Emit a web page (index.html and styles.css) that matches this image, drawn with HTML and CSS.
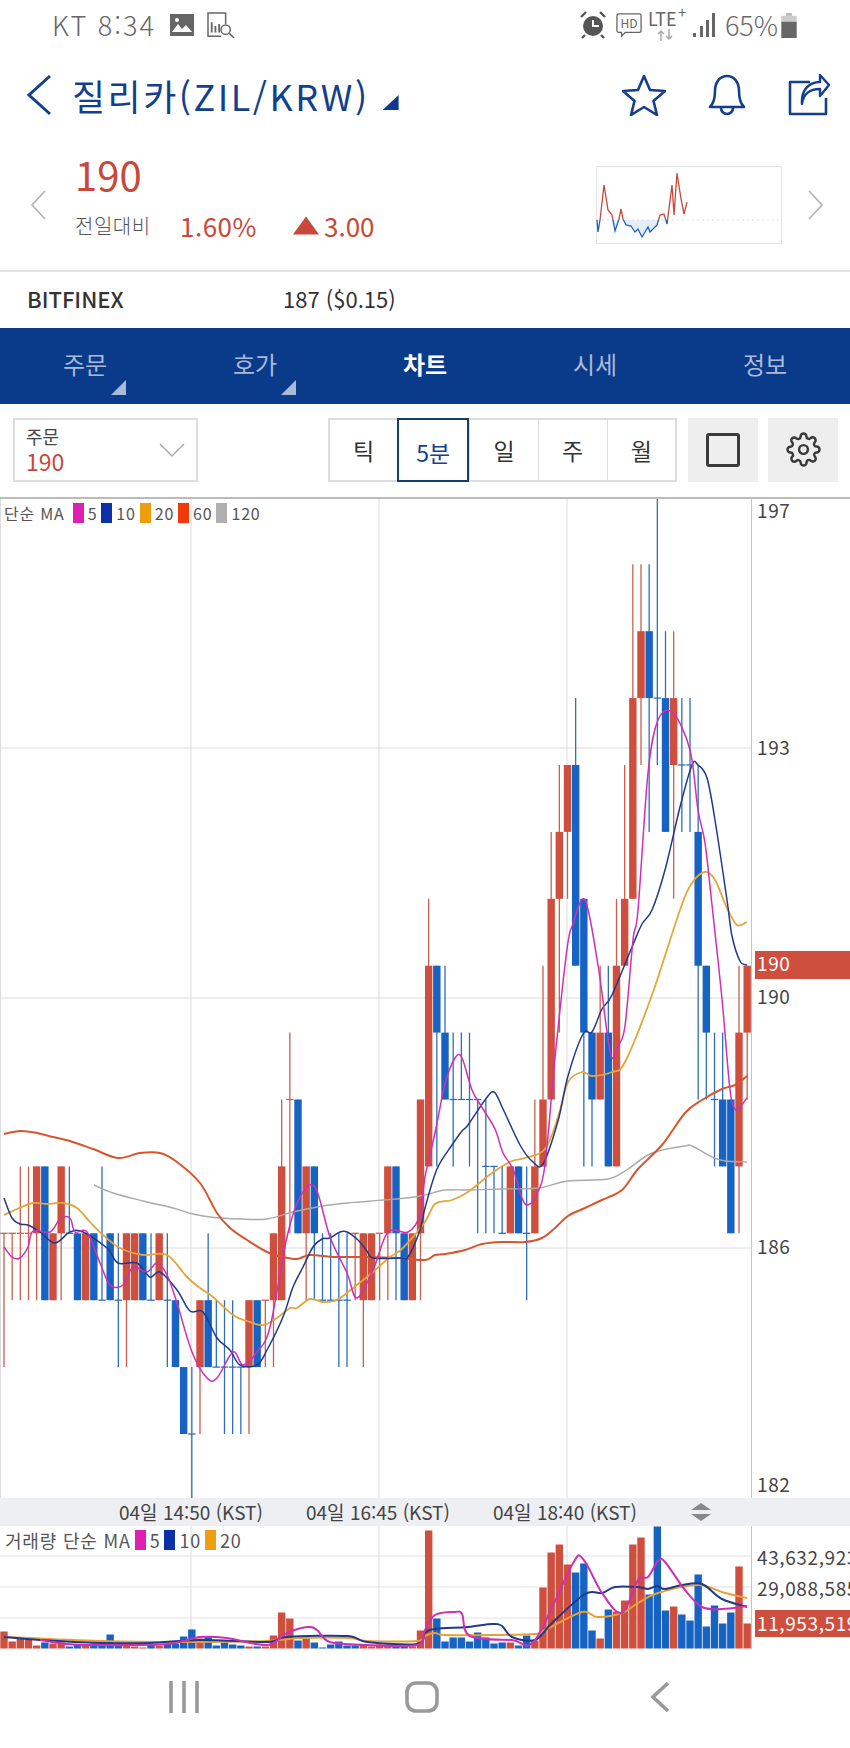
FILE: index.html
```html
<!DOCTYPE html>
<html lang="ko">
<head>
  <meta charset="UTF-8">
  <meta name="viewport" content="width=device-width, initial-scale=1.0">
  <title>질리카(ZIL/KRW) 차트</title>
  <link rel="stylesheet" href="styles.css">
</head>
<body>

  <!-- 상태바 -->
  <div class="status">
    <span class="status-text carrier">KT 8:34</span>
    <svg class="ic-image" viewBox="0 0 24 22"><path d="M0 0h24v22H0z" fill="#666"/><path d="M2 18l6-8 4 5 4-4 6 7z" fill="#fff"/><circle cx="7" cy="6" r="2" fill="#fff"/></svg>
    <svg class="ic-search" viewBox="0 0 30 28"><g fill="none" stroke="#666" stroke-width="1.6"><path d="M15 26H1V1h19v12"/><circle cx="20" cy="19" r="5"/><path d="M24 23l5 5"/></g><path d="M5 11v11M9 15v7M13 13v9" stroke="#666" stroke-width="2"/></svg>
    <span class="status-right">
      <svg class="ic-alarm" viewBox="0 0 26 28"><circle cx="13" cy="15" r="10" fill="#555"/><path d="M13 9v6h6" fill="none" stroke="#fff" stroke-width="2"/><path d="M1 6l5-5M25 6l-5-5M5 24l-3 3M21 24l3 3" stroke="#555" stroke-width="2.4"/></svg>
      <svg class="ic-hd" viewBox="0 0 28 28"><path d="M3 2h22a2 2 0 0 1 2 2v16a2 2 0 0 1-2 2H10l-4 4v-4H3a2 2 0 0 1-2-2V4a2 2 0 0 1 2-2z" fill="none" stroke="#666" stroke-width="1.4"/><text x="14" y="17" class="hd-text">HD</text></svg>
      <span class="lte">LTE<sup>+</sup><svg class="ic-updata" viewBox="0 0 18 12"><path d="M5 12V2M2 5l3-3 3 3M13 0v10M10 7l3 3 3-3" fill="none" stroke="#aaa" stroke-width="1.5"/></svg></span>
      <svg class="ic-signal" viewBox="0 0 24 24"><path d="M1 20h3v4H1zM8 13h3v11H8zM14 7h3v17h-3zM20 0h3v24h-3z" fill="#666"/></svg>
      <span class="status-text">65%</span>
      <svg class="ic-battery" viewBox="0 0 18 26"><path d="M6 0h6v3H6z" fill="#bbb"/><path d="M1 3h16v6H1z" fill="#ccc"/><path d="M1 9h16v17H1z" fill="#666"/></svg>
    </span>
  </div>

  <!-- 종목 헤더 -->
  <div class="header">
    <svg class="ic-back" viewBox="0 0 26 42"><path d="M24 2L3 21l21 19" fill="none" stroke="#123f8e" stroke-width="3"/></svg>
    <h1 class="title">질리카(ZIL/KRW)</h1>
    <span class="title-tri"></span>
    <div class="header-icons">
      <svg class="ic-star" viewBox="0 0 44 42"><path d="M22 2l6 14 15 1-11.500 10 3.500 14-13-8-13 8 3.500-14L1 17l15-1z" fill="none" stroke="#123f8e" stroke-width="2.600" stroke-linejoin="round"/></svg>
      <svg class="ic-bell" viewBox="0 0 40 42"><path d="M3 33c4-4 5-8 5-16C8 8 13 2 20 2s12 6 12 15c0 8 1 12 5 16z" fill="none" stroke="#123f8e" stroke-width="2.600" stroke-linejoin="round"/><path d="M14 34a6 6 0 0 0 12 0" fill="none" stroke="#123f8e" stroke-width="2.600"/></svg>
      <svg class="ic-share" viewBox="0 0 42 42"><path d="M22 8H2v32h36V24" fill="none" stroke="#123f8e" stroke-width="2.600" stroke-linejoin="round"/><path d="M14 30c1-10 8-15 18-15v7l9-11-9-10v7C20 8 13 17 14 30z" fill="none" stroke="#123f8e" stroke-width="2.400" stroke-linejoin="round"/></svg>
    </div>
  </div>

  <!-- 현재가 -->
  <div class="quote">
    <svg class="ic-side" viewBox="0 0 16 30"><path d="M15 1L2 15l13 14" fill="none" stroke="#b5b5b5" stroke-width="1.800"/></svg>
    <div class="quote-main">
      <div class="price">190</div>
      <div class="change">
        <span class="change-label">전일대비</span>
        <span class="change-rate">1.60%</span>
        <span class="change-tri"></span>
        <span class="change-val">3.00</span>
      </div>
    </div>
    <svg class="spark" viewBox="596 164 186 78">
      <defs>
        <clipPath id="sparkUp"><rect x="596" y="164" width="186" height="54"/></clipPath>
        <clipPath id="sparkDown"><rect x="596" y="218" width="186" height="24"/></clipPath>
      </defs>
      <rect x="596.500" y="164.500" width="185" height="77" fill="#fff" stroke="#e4e4e4"/>
      <path d="M612 218l3 11 4-12 4 0 3 6 5 1 4 6 3-3 4 8 6-10 2 5 7-7 3-5z" fill="#e3eefa"/>
      <path d="M597 218H782" stroke="#ddd" stroke-dasharray="2 3"/>
      <polyline class="spark-up" clip-path="url(#sparkUp)" points="597,218 598,230 600,218 604,183 608,208 612,213 615,229 619,217 621,207 623,217 626,223 631,224 635,230 638,227 642,235 648,225 650,230 657,223 660,213 664,212 667,222 672,183 674,213 677,171 681,197 684,212 687,200"/>
      <polyline class="spark-down" clip-path="url(#sparkDown)" points="597,218 598,230 600,218 604,183 608,208 612,213 615,229 619,217 621,207 623,217 626,223 631,224 635,230 638,227 642,235 648,225 650,230 657,223 660,213 664,212 667,222 672,183 674,213 677,171 681,197 684,212 687,200"/>
    </svg>
    <svg class="ic-side" viewBox="0 0 16 30"><path d="M1 1l13 14L1 29" fill="none" stroke="#b5b5b5" stroke-width="1.800"/></svg>
  </div>

  <div class="exchange">
    <span class="exchange-name">BITFINEX</span>
    <span class="exchange-price">187 ($0.15)</span>
  </div>

  <!-- 탭 -->
  <div class="tabs">
    <div class="tab has-tri">주문</div>
    <div class="tab has-tri">호가</div>
    <div class="tab active">차트</div>
    <div class="tab">시세</div>
    <div class="tab">정보</div>
  </div>

  <!-- 차트 옵션 -->
  <div class="controls">
    <div class="select">
      <div class="select-text">
        <div class="select-label">주문</div>
        <div class="select-value">190</div>
      </div>
      <svg class="ic-down" viewBox="0 0 26 14"><path d="M1 1l12 12L25 1" fill="none" stroke="#aaa" stroke-width="1.400"/></svg>
    </div>
    <div class="periods">
      <div class="period">틱</div>
      <div class="period on">5분</div>
      <div class="period">일</div>
      <div class="period">주</div>
      <div class="period">월</div>
    </div>
    <div class="tool"><span class="tool-square"></span></div>
    <div class="tool">
      <svg class="ic-gear" viewBox="0 0 24 24" fill="none" stroke="#3a3a3a" stroke-width="1.700">
        <circle cx="12" cy="12" r="3"/>
        <path d="M19.400 15a1.650 1.650 0 0 0 .33 1.820l.06.06a2 2 0 0 1 0 2.830 2 2 0 0 1-2.830 0l-.06-.06a1.650 1.650 0 0 0-1.820-.33 1.650 1.650 0 0 0-1 1.510V21a2 2 0 0 1-2 2 2 2 0 0 1-2-2v-.09A1.650 1.650 0 0 0 9 19.400a1.650 1.650 0 0 0-1.820.33l-.06.06a2 2 0 0 1-2.830 0 2 2 0 0 1 0-2.830l.06-.06a1.650 1.650 0 0 0 .33-1.820 1.650 1.650 0 0 0-1.510-1H3a2 2 0 0 1-2-2 2 2 0 0 1 2-2h.09A1.650 1.650 0 0 0 4.600 9a1.650 1.650 0 0 0-.33-1.820l-.06-.06a2 2 0 0 1 0-2.830 2 2 0 0 1 2.830 0l.06.06a1.650 1.650 0 0 0 1.820.33H9a1.650 1.650 0 0 0 1-1.510V3a2 2 0 0 1 2-2 2 2 0 0 1 2 2v.09a1.650 1.650 0 0 0 1 1.510 1.650 1.650 0 0 0 1.820-.33l.06-.06a2 2 0 0 1 2.830 0 2 2 0 0 1 0 2.830l-.06.06a1.650 1.650 0 0 0-.33 1.820V9a1.650 1.650 0 0 0 1.510 1H21a2 2 0 0 1 2 2 2 2 0 0 1-2 2h-.09a1.650 1.650 0 0 0-1.510 1z"/>
      </svg>
    </div>
  </div>

  <!-- 가격 차트 -->
  <div class="chart-price">
    <svg id="priceChart" class="chart-svg" viewBox="0 499 850 999" width="850" height="999"></svg>
    <div class="legend">
      <span class="legend-name">단순 MA</span>
      <i class="sw ma5"></i><span>5</span>
      <i class="sw ma10"></i><span>10</span>
      <i class="sw ma20"></i><span>20</span>
      <i class="sw ma60"></i><span>60</span>
      <i class="sw ma120"></i><span>120</span>
    </div>
  </div>

  <div class="timebar">
    <span class="time">04일 14:50 (KST)</span>
    <span class="time">04일 16:45 (KST)</span>
    <span class="time">04일 18:40 (KST)</span>
    <svg class="ic-updown" viewBox="0 0 20 18"><path d="M10 0l10 7H0zM0 11h20l-10 7z" fill="#888"/></svg>
  </div>

  <!-- 거래량 차트 -->
  <div class="chart-vol">
    <svg id="volChart" class="chart-svg" viewBox="0 1526 850 123" width="850" height="123"></svg>
    <div class="legend vol-legend">
      <span>거래량 단순 MA</span>
      <i class="sw ma5"></i><span>5</span>
      <i class="sw ma10"></i><span>10</span>
      <i class="sw ma20"></i><span>20</span>
    </div>
  </div>

  <!-- 하단 내비 -->
  <div class="softkeys">
    <svg class="key" viewBox="0 0 30 32"><path d="M2 0v32M15 0v32M28 0v32" stroke="#999" stroke-width="3.600"/></svg>
    <svg class="key" viewBox="0 0 34 32"><rect x="2" y="2" width="30" height="28" rx="9" fill="none" stroke="#999" stroke-width="3.600"/></svg>
    <svg class="key" viewBox="0 0 20 32"><path d="M18 2L3 16l15 14" fill="none" stroke="#999" stroke-width="3.600"/></svg>
  </div>

  <script src="chart.js"></script>

</body>
</html>
```

FILE: styles.css
```css
* {
  margin: 0;
  padding: 0;
  box-sizing: border-box;
}

html, body {
  width: 850px;
  height: 1748px;
  overflow: hidden;
  background: #fff;
  font-family: "Noto Sans CJK KR", "Noto Sans", sans-serif;
  color: #444;
}

svg {
  display: block;
  flex: none;
}

/* status bar */
.status {
  display: flex;
  align-items: center;
  height: 50px;
  padding: 0 52px;
}

.status-text {
  font-size: 27px;
  line-height: 30px;
  color: #666;
  font-weight: 300;
}

.carrier { letter-spacing: 2px; }

.ic-image { width: 24px; height: 22px; margin-left: 14px; }
.ic-search { width: 30px; height: 26px; margin-left: 12px; }

.status-right {
  display: flex;
  align-items: center;
  margin-left: auto;
}

.ic-alarm { width: 26px; height: 28px; }
.ic-hd { width: 28px; height: 26px; margin-left: 9px; }
.hd-text {
  font-size: 13px;
  text-anchor: middle;
  fill: #666;
}

.lte {
  position: relative;
  width: 38px;
  height: 36px;
  margin-left: 5px;
  font-size: 18px;
  line-height: 22px;
  color: #666;
}

.lte sup {
  position: absolute;
  top: -6px;
  left: 30px;
  font-size: 15px;
  line-height: 22px;
}

.ic-updata {
  position: absolute;
  top: 22px;
  left: 8px;
  width: 18px;
  height: 12px;
}

.ic-signal { width: 24px; height: 24px; margin: 0 9px 0 6px; }
.ic-battery { width: 18px; height: 25px; margin-left: 2px; }

/* header */
.header {
  display: flex;
  align-items: center;
  height: 90px;
  padding: 0 20px 0 26px;
}

.ic-back { width: 26px; height: 42px; }

.title {
  margin-left: 20px;
  font-size: 36px;
  line-height: 44px;
  font-weight: 400;
  color: #123f8e;
  letter-spacing: 2.5px;
  white-space: nowrap;
}

.title-tri {
  width: 16px;
  height: 15px;
  margin: 15px 0 0 13px;
  background: #0d3a8c;
  clip-path: polygon(100% 0, 100% 100%, 0 100%);
}

.header-icons {
  display: flex;
  align-items: center;
  margin-left: auto;
  gap: 41px;
}

.ic-star { width: 44px; height: 42px; }
.ic-bell { width: 40px; height: 42px; }
.ic-share { width: 42px; height: 42px; }

/* quote */
.quote {
  display: flex;
  align-items: center;
  height: 132px;
  padding: 0 26px 0 30px;
  border-bottom: 2px solid #e4e4e4;
}

.ic-side { width: 16px; height: 30px; }

.quote-main {
  margin-left: 29px;
  padding-bottom: 20px;
}

.price {
  font-size: 40px;
  line-height: 48px;
  color: #c8483a;
}

.change {
  display: flex;
  align-items: center;
  margin-top: 13px;
  height: 30px;
}

.change-label {
  font-size: 20px;
  color: #555;
  font-weight: 300;
  width: 105px;
  letter-spacing: 0.5px;
}

.change-rate,
.change-val {
  font-size: 26px;
  color: #c8483a;
}

.change-rate { letter-spacing: 0.5px; }

.change-tri {
  width: 26px;
  height: 18px;
  margin: 0 5px 0 36px;
  background: #c8483a;
  clip-path: polygon(50% 0, 100% 100%, 0 100%);
}

.spark {
  width: 186px;
  height: 78px;
  margin-left: auto;
  margin-right: 26px;
}

.spark polyline {
  fill: none;
  stroke-width: 1.300;
}

.spark-up { stroke: #c8483a; }
.spark-down { stroke: #1763c4; }

/* exchange row */
.exchange {
  display: flex;
  align-items: center;
  height: 56px;
  padding: 0 0 5px 27px;
  font-size: 22px;
  color: #333;
}

.exchange-name {
  width: 256px;
  font-weight: 500;
}

/* tabs */
.tabs {
  display: flex;
  height: 76px;
  background: #0a3a8a;
}

.tab {
  position: relative;
  flex: 1;
  text-align: center;
  font-size: 24px;
  line-height: 72px;
  color: #a9bad6;
}

.tab.active {
  color: #fff;
  font-weight: 700;
}

.tab.has-tri::after {
  content: "";
  position: absolute;
  left: 111px;
  bottom: 9px;
  width: 15px;
  height: 15px;
  background: #a9bad6;
  clip-path: polygon(100% 0, 100% 100%, 0 100%);
}

/* controls */
.controls {
  display: flex;
  align-items: center;
  height: 95px;
  padding: 0 12px 2px 13px;
  border-bottom: 2px solid #bbb;
}

.select {
  display: flex;
  align-items: center;
  justify-content: space-between;
  width: 185px;
  height: 64px;
  padding: 0 11px 0 11px;
  border: 2px solid #ddd;
}

.select-label {
  font-size: 18px;
  line-height: 24px;
  color: #444;
}

.select-value {
  font-size: 23px;
  line-height: 27px;
  color: #c8483a;
}

.ic-down { width: 26px; height: 14px; }

.periods {
  display: flex;
  width: 350px;
  height: 64px;
  margin-left: 130px;
  border: 2px solid #ddd;
}

.period {
  flex: 1;
  text-align: center;
  font-size: 23px;
  line-height: 60px;
  color: #333;
  border-left: 1px solid #ddd;
}

.period:first-child { border-left: 0; }

.period.on {
  margin: -2px 0;
  line-height: 64px;
  border: 2px solid #123f70;
  color: #123f8e;
}

.tool {
  display: flex;
  align-items: center;
  justify-content: center;
  width: 70px;
  height: 64px;
  margin-left: 11px;
  background: #eee;
}

.tool + .tool { margin-left: 10px; }

.tool-square {
  width: 34px;
  height: 34px;
  border: 3px solid #3a3a3a;
  border-radius: 3px;
}

.ic-gear { width: 35px; height: 35px; }

/* charts */
.chart-price {
  position: relative;
  height: 999px;
}

.chart-vol {
  position: relative;
  height: 123px;
}

.chart-svg .grid {
  stroke: #dcdcdc;
  stroke-width: 1;
}

.chart-svg .grid-light {
  stroke: #ececec;
  stroke-width: 1.500;
}

.chart-svg .axis {
  stroke: #c4c4c4;
  stroke-width: 1;
}

.chart-svg .wick { stroke-width: 1.300; }
.chart-svg .wick.r { stroke: #c9604f; }
.chart-svg .wick.b { stroke: #2f6fb8; }
.chart-svg .body.r { fill: #cf4f3f; }
.chart-svg .body.b { fill: #1763c4; }

.chart-svg .ma-line {
  fill: none;
  stroke-linejoin: round;
}

.chart-svg .line5 { stroke: #cf2fb5; stroke-width: 1.500; }
.chart-svg .line10 { stroke: #1f3a8a; stroke-width: 1.500; }
.chart-svg .line20 { stroke: #e2a63a; stroke-width: 1.800; }
.chart-svg .line60 { stroke: #d9552e; stroke-width: 2; }
.chart-svg .line120 { stroke: #aaa; stroke-width: 1.400; }
.chart-svg .vline5 { stroke: #cf2fb5; stroke-width: 2; }
.chart-svg .vline10 { stroke: #1f3a8a; stroke-width: 2; }
.chart-svg .vline20 { stroke: #e8a032; stroke-width: 2; }

.chart-svg .label {
  font-family: "Noto Sans CJK KR", "Noto Sans", sans-serif;
  font-size: 19px;
  letter-spacing: 0.6px;
  fill: #444;
}

.chart-svg .tag { fill: #cf4f3f; }

.chart-svg .tag-label {
  font-family: "Noto Sans CJK KR", "Noto Sans", sans-serif;
  font-size: 19px;
  letter-spacing: 0.6px;
  fill: #fff;
}

.legend {
  position: absolute;
  left: 4px;
  top: 4px;
  display: flex;
  align-items: center;
  height: 20px;
  font-size: 16px;
  letter-spacing: 0.8px;
  color: #555;
}

.legend span { line-height: 20px; }

.legend-name { margin-right: 4px; }

.sw {
  width: 11px;
  height: 20px;
  margin: 0 4px;
}

.sw.ma5 { background: #e020b0; }
.sw.ma10 { background: #0d2fa8; }
.sw.ma20 { background: #ee9f10; }
.sw.ma60 { background: #f03a0a; }
.sw.ma120 { background: #b0b0b0; }

.vol-legend { left: 5px; top: 4px; font-size: 18px; }

.timebar {
  position: relative;
  display: flex;
  align-items: center;
  height: 28px;
  padding-left: 119px;
  background: #eeeff3;
  gap: 43px;
}

.time {
  width: 144px;
  font-size: 19px;
  line-height: 28px;
  white-space: nowrap;
  color: #444;
}

.ic-updown {
  width: 20px;
  height: 18px;
  margin-left: 11px;
}

/* soft keys */
.softkeys {
  display: flex;
  align-items: flex-start;
  height: 99px;
  padding: 32px 0 0 169px;
}

.key { height: 32px; }
.key:nth-child(1) { width: 30px; }
.key:nth-child(2) { width: 34px; margin-left: 206px; }
.key:nth-child(3) { width: 20px; margin-left: 211px; }
```

FILE: chart.js
```js
// 1틱 = 66.9px, level 0 = y 1434
const levelY = l => 1434 - 66.9 * l;
const candleX = i => 4 + 8.1667 * i;
const NS = 'http://www.w3.org/2000/svg';

// color high bodyTop bodyBottom low (top === bottom 이면 도지)
const candles = [
  'r 3 3 3 1','r 3 3 3 2','r 4 3 3 2','r 4 3 3 2','r 4 4 3 2','b 4 4 2 2','r 3 3 2 2','r 4 4 3 2','b 4 3 3 3','b 3 3 2 2',
  'r 3 3 2 2','b 3 3 2 2','b 4 2 2 2','b 3 3 2 2','b 3 2 2 1','r 3 3 2 1','r 3 3 2 2','b 3 3 2 2','b 3 2 2 2','r 3 3 2 2',
  'b 3 2 2 1','b 2 2 1 1','b 1 1 0 0','b 1 0 0 -1','r 2 2 1 0','b 3 2 1 1','b 2 1 1 1','b 2 1 1 0','b 2 1 1 0','b 1 1 1 0',
  'r 2 2 1 0','b 2 2 1 1','r 2 2 2 1','r 3 3 2 1','r 5 4 2 2','r 6 5 5 3','b 5 5 3 3','r 4 4 3 2','b 4 4 3 2','b 3 2 2 2',
  'b 3 2 2 2','b 3 2 2 1','b 3 2 2 1','r 3 3 3 2','r 3 3 2 1','r 3 3 2 2','r 3 3 3 2','r 4 4 3 2','b 4 4 3 2','b 3 3 2 2',
  'r 3 3 2 2','r 5 5 3 2','r 8 7 4 4','b 7 7 6 4','b 7 6 5 5','b 6 5 5 4','b 6 5 5 5','b 6 5 5 4','b 5 5 5 3','b 5 4 4 3',
  'b 4 4 4 3','b 4 3 3 3','r 4 4 3 3','b 4 4 3 3','b 4 3 3 2','r 5 4 3 3','r 7 5 4 4','r 9 8 5 5','r 10 9 8 6','r 10 10 9 8',
  'b 11 10 7 7','b 8 8 6 4','b 6 6 5 4','r 7 6 5 5','b 7 6 4 4','r 8 7 4 4','r 10 8 7 7','r 13 11 8 8','r 13 12 11 10','b 13 12 11 9',
  'b 14 11 11 10','b 12 11 9 9','r 12 11 10 8','b 11 10 10 9','b 11 10 10 9','b 10 9 7 5','b 7 7 6 5','b 6 5 5 4','b 6 5 4 4','b 5 5 3 3',
  'r 7 6 4 3','r 7 7 6 5'
].map(s => {
  const [c, hi, top, bot, lo] = s.split(' ');
  return { c, hi: +hi, top: +top, bot: +bot, lo: +lo };
});

const volumes = [
  17,7,10,9,3,6,5,6,2,4,4,5,6,14,6,4,2,1,4,3,5,5,12,19,10,12,3,6,4,3,2,2,2,13,36,30,8,10,6,1,
  4,7,3,3,4,2,4,4,4,2,2,18,118,30,7,11,11,7,16,11,5,6,6,3,13,8,61,96,104,84,76,85,18,10,39,37,
  48,104,111,54,122,38,42,34,28,74,22,43,25,36,82,25
];
const volColors = 'rrrrrbrrbb' + 'rbbbbrrrbr' + 'bbbbrbbbbb' + 'rbrrrrbrbb' + 'bbbbrrrrbb' +
  'rrrbbbbbbb' + 'bbrbbrrrrr' + 'bbbrbrrrrb' + 'bbrbbbbbbb' + 'rr';

const priceLines = {
  line120: '94,1185 113,1193 143,1201 173,1208 193,1214 210,1217 240,1219 267,1219 293,1212 323,1206 347,1203 360,1202 383,1200 407,1198 425,1195 445,1190 468,1190 502,1189 538,1188 568,1181 608,1179 628,1169 652,1153 685,1146 692,1146 712,1157 725,1161 747,1162',
  line60: '4,1134 20,1131 37,1133 53,1137 70,1141 93,1149 118,1158 140,1153 160,1153 177,1162 200,1183 217,1213 230,1228 247,1240 267,1252 283,1257 297,1259 310,1255 333,1257 367,1257 400,1258 425,1260 435,1255 445,1254 465,1250 482,1244 502,1242 525,1242 542,1238 555,1228 568,1216 585,1208 602,1200 622,1190 638,1169 662,1145 685,1113 702,1100 722,1089 735,1085 747,1076',
  line20: '4,1215 17,1209 33,1203 47,1204 63,1203 77,1208 90,1222 103,1235 120,1248 143,1255 167,1255 187,1277 200,1288 213,1297 233,1315 247,1321 263,1325 277,1318 290,1308 297,1308 310,1299 323,1302 337,1300 353,1288 373,1272 390,1257 403,1248 425,1222 435,1204 452,1200 468,1192 492,1173 512,1161 525,1158 545,1149 558,1117 568,1082 582,1072 592,1076 612,1072 625,1062 652,995 680,910 692,883 705,872 715,880 727,908 737,925 747,922',
  line10: '4,1198 12,1218 20,1224 28,1225 40,1232 55,1243 70,1232 83,1232 107,1248 118,1263 137,1263 150,1277 160,1272 177,1290 190,1311 203,1312 217,1338 230,1350 240,1365 257,1365 267,1350 283,1317 293,1287 303,1267 313,1247 322,1239 330,1238 340,1232 347,1232 358,1240 367,1251 373,1258 400,1258 408,1257 420,1230 425,1208 437,1169 452,1145 462,1131 468,1125 485,1100 494,1092 503,1109 520,1145 532,1161 543,1164 558,1121 568,1076 583,1034 592,1032 602,1009 612,995 632,947 642,924 652,910 665,870 680,807 692,765 698,765 707,778 715,820 727,900 732,936 740,961 747,965',
  line5: '4,1247 12,1257 20,1258 28,1247 33,1231 50,1232 60,1219 70,1218 75,1232 87,1232 100,1263 110,1285 123,1285 133,1267 147,1272 157,1263 167,1275 177,1303 192,1352 207,1378 217,1378 233,1352 243,1365 257,1352 270,1327 287,1237 300,1197 315,1187 330,1237 347,1273 357,1298 373,1270 388,1232 408,1232 420,1215 425,1177 435,1133 445,1084 455,1058 462,1058 472,1090 483,1109 495,1129 503,1153 513,1169 522,1198 528,1205 537,1194 545,1165 555,1058 567,949 573,924 585,900 598,965 607,1032 612,1058 618,1046 625,1026 633,940 638,910 648,773 658,720 673,713 690,750 698,810 705,843 712,905 722,999 730,1090 735,1109 740,1107 747,1098'
};

const volLines = {
  vline20: '4,1637 100,1641 192,1642 267,1641 300,1638 350,1638 367,1641 417,1641 425,1636 435,1633 445,1635 492,1635 535,1634 545,1630 582,1612 597,1617 622,1613 638,1603 658,1593 698,1585 725,1593 747,1598',
  vline10: '4,1637 40,1640 100,1643 150,1643 200,1640 267,1642 287,1637 347,1636 367,1642 417,1644 425,1633 435,1629 468,1627 492,1624 502,1626 512,1637 535,1640 552,1623 585,1594 602,1593 615,1587 638,1587 648,1589 657,1586 665,1589 682,1585 702,1584 722,1599 747,1607',
  vline5: '40,1640 67,1644 100,1645 167,1644 200,1637 227,1638 267,1645 287,1633 307,1627 317,1630 330,1642 367,1645 417,1645 425,1630 435,1615 455,1612 462,1614 470,1636 512,1640 535,1640 572,1565 583,1559 602,1593 622,1613 638,1580 648,1577 658,1561 665,1562 685,1590 702,1607 722,1609 747,1606'
};

function add(svg, tag, attrs, text) {
  const el = document.createElementNS(NS, tag);
  for (const k in attrs) el.setAttribute(k, attrs[k]);
  if (text) el.textContent = text;
  svg.appendChild(el);
  return el;
}

function line(svg, x1, y1, x2, y2, cls) {
  add(svg, 'line', { x1, y1, x2, y2, class: cls });
}

// 점 목록을 부드러운 곡선으로 (catmull-rom)
function smoothPath(points) {
  const p = points.split(' ').map(s => s.split(',').map(Number));
  let d = `M${p[0][0]} ${p[0][1]}`;
  for (let i = 0; i < p.length - 1; i++) {
    const a = p[i - 1] || p[i];
    const b = p[i];
    const c = p[i + 1];
    const e = p[i + 2] || c;
    const c1x = b[0] + (c[0] - a[0]) / 6;
    const c1y = b[1] + (c[1] - a[1]) / 6;
    const c2x = c[0] - (e[0] - b[0]) / 6;
    const c2y = c[1] - (e[1] - b[1]) / 6;
    d += `C${c1x} ${c1y} ${c2x} ${c2y} ${c[0]} ${c[1]}`;
  }
  return d;
}

function drawLines(svg, lines) {
  for (const cls in lines) {
    add(svg, 'path', { d: smoothPath(lines[cls]), class: `ma-line ${cls}` });
  }
}

function verticals(svg, y1, y2) {
  [191, 379, 567].forEach(x => line(svg, x, y1, x, y2, 'grid'));
  line(svg, 751.5, y1, 751.5, y2, 'axis');
}

function drawPrice(svg) {
  line(svg, 0.5, 499, 0.5, 1498, 'grid');
  verticals(svg, 499, 1498);
  [748, 998, 1248].forEach(y => line(svg, 0, y, 751, y, 'grid'));

  candles.forEach((d, i) => {
    const x = candleX(i);
    line(svg, x, levelY(d.hi), x, levelY(d.lo), `wick ${d.c}`);
    if (d.top === d.bot) {
      line(svg, x - 3.7, levelY(d.top), x + 3.7, levelY(d.top), `wick ${d.c}`);
    } else {
      add(svg, 'rect', {
        x: x - 3.7,
        y: levelY(d.top),
        width: 7.4,
        height: levelY(d.bot) - levelY(d.top),
        class: `body ${d.c}`
      });
    }
  });

  drawLines(svg, priceLines);

  [[197, 518], [193, 755], [190, 1004], [186, 1254], [182, 1492]].forEach(([v, y]) => {
    add(svg, 'text', { x: 757, y, class: 'label' }, String(v));
  });
  add(svg, 'rect', { x: 755, y: 951, width: 95, height: 28, class: 'tag' });
  add(svg, 'text', { x: 757, y: 971, class: 'tag-label' }, '190');
}

function drawVolume(svg) {
  [1556, 1587, 1618].forEach(y => line(svg, 0, y, 751, y, 'grid-light'));
  verticals(svg, 1526, 1649);

  volumes.forEach((h, i) => {
    add(svg, 'rect', {
      x: candleX(i) - 3.7,
      y: 1648.5 - h,
      width: 7.4,
      height: h,
      class: `body ${volColors[i]}`
    });
  });

  drawLines(svg, volLines);

  add(svg, 'text', { x: 757, y: 1565, class: 'label' }, '43,632,923');
  add(svg, 'text', { x: 757, y: 1596, class: 'label' }, '29,088,585');
  add(svg, 'rect', { x: 755, y: 1610, width: 95, height: 27, class: 'tag' });
  add(svg, 'text', { x: 757, y: 1631, class: 'tag-label' }, '11,953,519');
}

drawPrice(document.getElementById('priceChart'));
drawVolume(document.getElementById('volChart'));
```
